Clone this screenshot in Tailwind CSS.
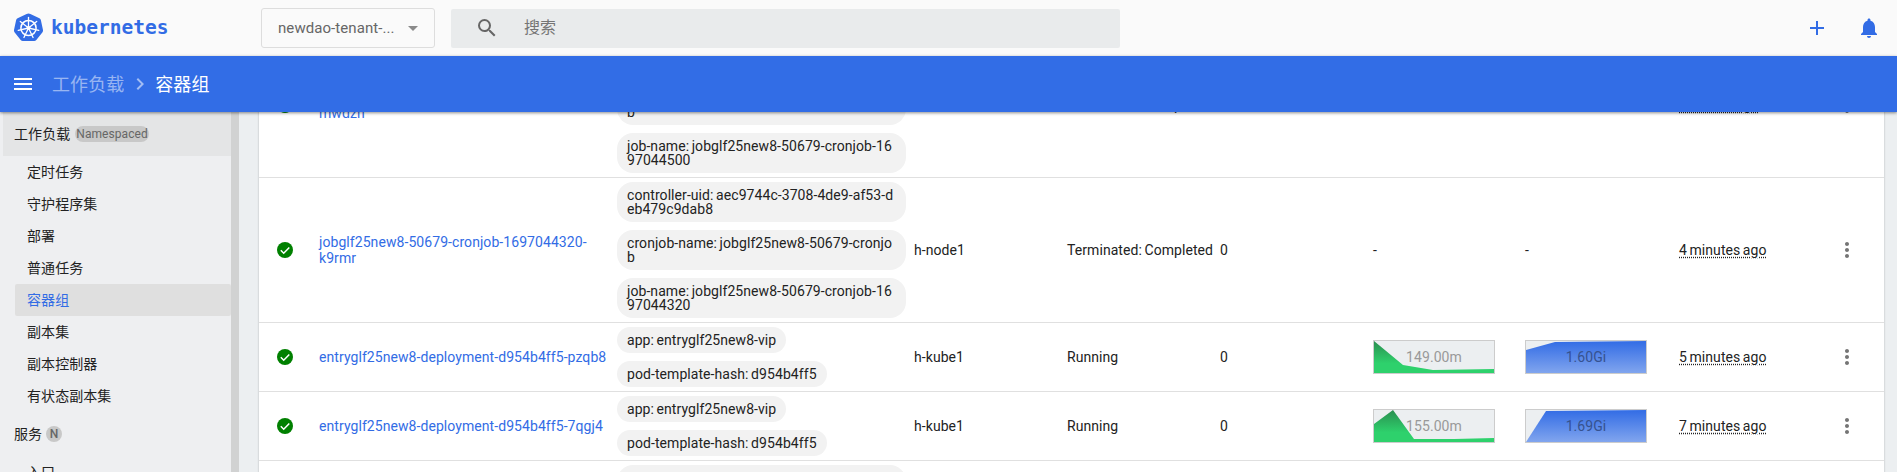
<!DOCTYPE html>
<html>

<head>
  <meta charset="UTF-8" />
  <title>kubernetes</title>
  <script src="https://cdn.jsdelivr.net/npm/@tailwindcss/browser@4"></script>
</head>

<body class="overflow-hidden">
  <div
    class="flex h-[472px] w-[1897px] flex-col overflow-hidden font-['Roboto','Noto_Sans_CJK_SC',sans-serif] text-[14px] tracking-[0.07px] text-[#222] [word-spacing:-1px]">

    <!-- top toolbar -->
    <div class="relative z-10 flex h-[56px] shrink-0 items-center bg-[#fafafa]">
      <div class="ml-[14px] flex w-[247px] items-center">
        <svg class="h-[30px] w-[29px]" viewBox="0 0 29 30">
          <path fill="#326ce5"
            d="M14.5 0.5 Q15.5 0.5 16.4 1 L25.4 5.3 Q26.6 5.9 26.9 7.2 L29 17 Q29.2 18.2 28.5 19.2 L22.3 27.1 Q21.5 28.1 20.2 28.1 L8.8 28.1 Q7.5 28.1 6.7 27.1 L0.5 19.2 Q-0.2 18.2 0 17 L2.1 7.2 Q2.4 5.9 3.6 5.3 L12.6 1 Q13.5 0.5 14.5 0.5Z" />
          <g fill="none" stroke="#fff" stroke-linecap="round">
            <circle cx="14.5" cy="15" r="7.6" stroke-width="1.5" />
            <g stroke-width="1.3">
              <path d="M14.5 15 V4.5" />
              <path d="M14.5 15 V4.5" transform="rotate(51.4 14.5 15)" />
              <path d="M14.5 15 V4.5" transform="rotate(102.9 14.5 15)" />
              <path d="M14.5 15 V4.5" transform="rotate(154.3 14.5 15)" />
              <path d="M14.5 15 V4.5" transform="rotate(205.7 14.5 15)" />
              <path d="M14.5 15 V4.5" transform="rotate(257.1 14.5 15)" />
              <path d="M14.5 15 V4.5" transform="rotate(308.6 14.5 15)" />
            </g>
          </g>
          <circle cx="14.5" cy="15" r="2" fill="#fff" />
        </svg>
        <span class="ml-[8px] font-['DejaVu_Sans_Mono',monospace] text-[19.5px] font-bold tracking-normal text-[#326ce5]">kubernetes</span>
      </div>
      <div
        class="flex h-[40px] w-[174px] items-center justify-between rounded-[3px] border border-[#ddd] pl-[16px] pr-[16px] text-[15px] text-[#666]">
        <span>newdao-tenant-...</span>
        <span class="h-0 w-0 border-x-[5px] border-t-[5px] border-x-transparent border-t-[#8a8a8a]"></span>
      </div>
      <div class="ml-[16px] flex h-[39px] w-[669px] items-center rounded-[2px] bg-[#e9ebec] pl-[24px]">
        <svg class="h-[24px] w-[24px]" viewBox="0 0 24 24" fill="#666">
          <path
            d="M15.5 14h-.79l-.28-.27A6.47 6.47 0 0 0 16 9.5 6.5 6.5 0 1 0 9.5 16c1.61 0 3.09-.59 4.23-1.57l.27.28v.79l5 4.99L20.49 19l-4.99-5zm-6 0C7.01 14 5 11.99 5 9.5S7.01 5 9.5 5 14 7.01 14 9.5 11.99 14 9.5 14z" />
        </svg>
        <span class="ml-[25px] text-[16px] text-[#757575]">搜索</span>
      </div>
      <div class="ml-auto mr-[16px] flex items-center gap-[28px]">
        <svg class="h-[24px] w-[24px]" viewBox="0 0 24 24" fill="#326ce5">
          <path d="M19 13h-6v6h-2v-6H5v-2h6V5h2v6h6v2z" />
        </svg>
        <svg class="h-[24px] w-[24px]" viewBox="0 0 24 24" fill="#326ce5">
          <path
            d="M12 22c1.1 0 2-.9 2-2h-4c0 1.1.9 2 2 2zm6-6v-5c0-3.07-1.63-5.64-4.5-6.32V4c0-.83-.67-1.5-1.5-1.5s-1.5.67-1.5 1.5v.68C7.64 5.36 6 7.92 6 11v5l-2 2v1h16v-1l-2-2z" />
        </svg>
      </div>
    </div>

    <!-- breadcrumb bar -->
    <div
      class="relative z-10 flex h-[56px] shrink-0 items-center bg-[#326de6] pl-[11px] text-[18px] shadow-[0_1px_3px_rgba(0,0,0,0.45)]">
      <svg class="h-[24px] w-[24px]" viewBox="0 0 24 24" fill="#fff">
        <path d="M3 18h18v-2H3v2zm0-5h18v-2H3v2zm0-7v2h18V6H3z" />
      </svg>
      <span class="ml-[17px] text-white/50">工作负载</span>
      <svg class="ml-[4px] h-[24px] w-[24px]" viewBox="0 0 24 24" fill="#fff" fill-opacity="0.55">
        <path d="M10 6 8.6 7.4 13.2 12l-4.6 4.6L10 18l6-6z" />
      </svg>
      <span class="ml-[3px] text-white">容器组</span>
    </div>

    <div class="flex min-h-0 flex-1 overflow-hidden bg-[#eceff1]">
      <!-- sidebar -->
      <div class="flex h-full w-[239px] shrink-0 border-r-[8px] border-[#d1d2d2] bg-[#eeeff1] pl-[3px]">
        <div class="w-full">
          <div class="flex h-[44px] items-center gap-[5px] bg-[#e4e5e6] pl-[11px]">
            工作负载
            <span
              class="flex h-[16px] items-center rounded-full bg-[#c8c8c8] px-[1px] text-[12px] text-[#666]">Namespaced</span>
          </div>
          <div class="flex h-[32px] items-center pl-[24px]">定时任务</div>
          <div class="flex h-[32px] items-center pl-[24px]">守护程序集</div>
          <div class="flex h-[32px] items-center pl-[24px]">部署</div>
          <div class="flex h-[32px] items-center pl-[24px]">普通任务</div>
          <div class="ml-[12px] flex h-[32px] items-center rounded-[2px] bg-[#dfdfdf] pl-[12px] text-[#326ce5]">容器组</div>
          <div class="flex h-[32px] items-center pl-[24px]">副本集</div>
          <div class="flex h-[32px] items-center pl-[24px]">副本控制器</div>
          <div class="flex h-[32px] items-center pl-[24px]">有状态副本集</div>
          <div class="flex h-[44px] items-center gap-[4px] pl-[11px]">
            服务
            <span
              class="flex h-[16px] w-[16px] items-center justify-center rounded-full bg-[#c8c8c8] text-[12px] font-medium text-[#666]">N</span>
          </div>
          <div class="flex h-[32px] items-center pl-[24px]">入口</div>
        </div>
      </div>

      <!-- pod list -->
      <div class="min-w-0 flex-1 pl-[20px] pr-[13px]">
        <div class="mt-[-79px] bg-white leading-[16px] shadow-[0_0_2px_rgba(0,0,0,0.25)]">

          <div
            class="grid grid-cols-[60px_298px_297px_153px_153px_153px_152px_154px_1fr] items-center border-b border-[#e0e0e0] py-[4px]">
            <svg class="ml-[18px] h-[16px] w-[16px]" viewBox="0 0 16 16">
              <circle cx="8" cy="8" r="8" fill="#008000" />
              <path d="M3.8 8.3 6.7 11.2 12.3 5.4" fill="none" stroke="#fff" stroke-width="1.5" />
            </svg>
            <span class="text-[#326ce5]">jobglf25new8-50679-cronjob-1697044500-mwdzn</span>
            <div class="flex w-[289px] flex-col gap-[8px] break-all leading-[14px]">
              <span class="rounded-[16px] bg-[#f2f2f2] py-[6px] pl-[10px] pr-[12px]">controller-uid: 13a0c1f2-5b7e-4c0d-9e21-a47f08c3d5e1</span>
              <span class="rounded-[16px] bg-[#f2f2f2] py-[6px] pl-[10px] pr-[12px]">cronjob-name: jobglf25new8-50679-cronjob</span>
              <span class="rounded-[16px] bg-[#f2f2f2] py-[6px] pl-[10px] pr-[12px]">job-name: jobglf25new8-50679-cronjob-1697044500</span>
            </div>
            <span>h-node1</span>
            <span>Terminated: Completed</span>
            <span>0</span>
            <span>-</span>
            <span>-</span>
            <div class="flex items-center justify-between pr-[25px]">
              <span class="underline decoration-dotted underline-offset-2">1 minute ago</span>
              <svg class="h-[24px] w-[24px]" viewBox="0 0 24 24" fill="#757575">
                <path
                  d="M12 8c1.1 0 2-.9 2-2s-.9-2-2-2-2 .9-2 2 .9 2 2 2zm0 2c-1.1 0-2 .9-2 2s.9 2 2 2 2-.9 2-2-.9-2-2-2zm0 6c-1.1 0-2 .9-2 2s.9 2 2 2 2-.9 2-2-.9-2-2-2z" />
              </svg>
            </div>
          </div>

          <div
            class="grid grid-cols-[60px_298px_297px_153px_153px_153px_152px_154px_1fr] items-center border-b border-[#e0e0e0] py-[4px]">
            <svg class="ml-[18px] h-[16px] w-[16px]" viewBox="0 0 16 16">
              <circle cx="8" cy="8" r="8" fill="#008000" />
              <path d="M3.8 8.3 6.7 11.2 12.3 5.4" fill="none" stroke="#fff" stroke-width="1.5" />
            </svg>
            <span class="text-[#326ce5]">jobglf25new8-50679-cronjob-1697044320-k9rmr</span>
            <div class="flex w-[289px] flex-col gap-[8px] break-all leading-[14px]">
              <span class="rounded-[16px] bg-[#f2f2f2] py-[6px] pl-[10px] pr-[12px]">controller-uid: aec9744c-3708-4de9-af53-deb479c9dab8</span>
              <span class="rounded-[16px] bg-[#f2f2f2] py-[6px] pl-[10px] pr-[12px]">cronjob-name: jobglf25new8-50679-cronjob</span>
              <span class="rounded-[16px] bg-[#f2f2f2] py-[6px] pl-[10px] pr-[12px]">job-name: jobglf25new8-50679-cronjob-1697044320</span>
            </div>
            <span>h-node1</span>
            <span>Terminated: Completed</span>
            <span>0</span>
            <span>-</span>
            <span>-</span>
            <div class="flex items-center justify-between pr-[25px]">
              <span class="underline decoration-dotted underline-offset-2">4 minutes ago</span>
              <svg class="h-[24px] w-[24px]" viewBox="0 0 24 24" fill="#757575">
                <path
                  d="M12 8c1.1 0 2-.9 2-2s-.9-2-2-2-2 .9-2 2 .9 2 2 2zm0 2c-1.1 0-2 .9-2 2s.9 2 2 2 2-.9 2-2-.9-2-2-2zm0 6c-1.1 0-2 .9-2 2s.9 2 2 2 2-.9 2-2-.9-2-2-2z" />
              </svg>
            </div>
          </div>

          <div
            class="grid grid-cols-[60px_298px_297px_153px_153px_153px_152px_154px_1fr] items-center border-b border-[#e0e0e0] py-[4px]">
            <svg class="ml-[18px] h-[16px] w-[16px]" viewBox="0 0 16 16">
              <circle cx="8" cy="8" r="8" fill="#008000" />
              <path d="M3.8 8.3 6.7 11.2 12.3 5.4" fill="none" stroke="#fff" stroke-width="1.5" />
            </svg>
            <span class="text-[#326ce5]">entryglf25new8-deployment-d954b4ff5-pzqb8</span>
            <div class="flex w-[289px] flex-col items-start gap-[8px] break-all leading-[14px]">
              <span class="rounded-[16px] bg-[#f2f2f2] py-[6px] pl-[10px] pr-[10px]">app: entryglf25new8-vip</span>
              <span class="rounded-[16px] bg-[#f2f2f2] py-[6px] pl-[10px] pr-[10px]">pod-template-hash: d954b4ff5</span>
            </div>
            <span>h-kube1</span>
            <span>Running</span>
            <span>0</span>
            <div class="relative flex h-[34px] w-[122px] items-center justify-center border border-[#ccc] bg-[#eceff1] text-[#999]">
              <svg class="absolute inset-0 h-full w-full" viewBox="0 0 120 32" preserveAspectRatio="none">
                <defs>
                  <linearGradient id="cpu1" x1="0" y1="0" x2="0" y2="32" gradientUnits="userSpaceOnUse">
                    <stop offset="0" stop-color="#2a8f50" />
                    <stop offset="0.7" stop-color="#2ed16c" />
                  </linearGradient>
                </defs>
                <path d="M0 0 29 24 59 29 120 28 120 32 0 32Z" fill="url(#cpu1)" />
              </svg>
              <span class="relative">149.00m</span>
            </div>
            <div class="relative flex h-[34px] w-[122px] items-center justify-center border border-[#ccc] bg-[#eceff1] text-[#36528f]">
              <svg class="absolute inset-0 h-full w-full" viewBox="0 0 120 32" preserveAspectRatio="none">
                <defs>
                  <linearGradient id="mem1" x1="0" y1="0" x2="0" y2="32" gradientUnits="userSpaceOnUse">
                    <stop offset="0" stop-color="#326ce5" />
                    <stop offset="1" stop-color="#81a5ee" />
                  </linearGradient>
                </defs>
                <path d="M0 9 29 1 120 0 120 32 0 32Z" fill="url(#mem1)" />
              </svg>
              <span class="relative">1.60Gi</span>
            </div>
            <div class="flex items-center justify-between pr-[25px]">
              <span class="underline decoration-dotted underline-offset-2">5 minutes ago</span>
              <svg class="h-[24px] w-[24px]" viewBox="0 0 24 24" fill="#757575">
                <path
                  d="M12 8c1.1 0 2-.9 2-2s-.9-2-2-2-2 .9-2 2 .9 2 2 2zm0 2c-1.1 0-2 .9-2 2s.9 2 2 2 2-.9 2-2-.9-2-2-2zm0 6c-1.1 0-2 .9-2 2s.9 2 2 2 2-.9 2-2-.9-2-2-2z" />
              </svg>
            </div>
          </div>

          <div
            class="grid grid-cols-[60px_298px_297px_153px_153px_153px_152px_154px_1fr] items-center border-b border-[#e0e0e0] py-[4px]">
            <svg class="ml-[18px] h-[16px] w-[16px]" viewBox="0 0 16 16">
              <circle cx="8" cy="8" r="8" fill="#008000" />
              <path d="M3.8 8.3 6.7 11.2 12.3 5.4" fill="none" stroke="#fff" stroke-width="1.5" />
            </svg>
            <span class="text-[#326ce5]">entryglf25new8-deployment-d954b4ff5-7qgj4</span>
            <div class="flex w-[289px] flex-col items-start gap-[8px] break-all leading-[14px]">
              <span class="rounded-[16px] bg-[#f2f2f2] py-[6px] pl-[10px] pr-[10px]">app: entryglf25new8-vip</span>
              <span class="rounded-[16px] bg-[#f2f2f2] py-[6px] pl-[10px] pr-[10px]">pod-template-hash: d954b4ff5</span>
            </div>
            <span>h-kube1</span>
            <span>Running</span>
            <span>0</span>
            <div class="relative flex h-[34px] w-[122px] items-center justify-center border border-[#ccc] bg-[#eceff1] text-[#999]">
              <svg class="absolute inset-0 h-full w-full" viewBox="0 0 120 32" preserveAspectRatio="none">
                <defs>
                  <linearGradient id="cpu2" x1="0" y1="0" x2="0" y2="32" gradientUnits="userSpaceOnUse">
                    <stop offset="0" stop-color="#2a8f50" />
                    <stop offset="0.7" stop-color="#2ed16c" />
                  </linearGradient>
                </defs>
                <path d="M0 14 19 0 40 29 80 29 120 28 120 32 0 32Z" fill="url(#cpu2)" />
              </svg>
              <span class="relative">155.00m</span>
            </div>
            <div class="relative flex h-[34px] w-[122px] items-center justify-center border border-[#ccc] bg-[#eceff1] text-[#36528f]">
              <svg class="absolute inset-0 h-full w-full" viewBox="0 0 120 32" preserveAspectRatio="none">
                <defs>
                  <linearGradient id="mem2" x1="0" y1="0" x2="0" y2="32" gradientUnits="userSpaceOnUse">
                    <stop offset="0" stop-color="#326ce5" />
                    <stop offset="1" stop-color="#81a5ee" />
                  </linearGradient>
                </defs>
                <path d="M0 32 20 1 120 0 120 32Z" fill="url(#mem2)" />
              </svg>
              <span class="relative">1.69Gi</span>
            </div>
            <div class="flex items-center justify-between pr-[25px]">
              <span class="underline decoration-dotted underline-offset-2">7 minutes ago</span>
              <svg class="h-[24px] w-[24px]" viewBox="0 0 24 24" fill="#757575">
                <path
                  d="M12 8c1.1 0 2-.9 2-2s-.9-2-2-2-2 .9-2 2 .9 2 2 2zm0 2c-1.1 0-2 .9-2 2s.9 2 2 2 2-.9 2-2-.9-2-2-2zm0 6c-1.1 0-2 .9-2 2s.9 2 2 2 2-.9 2-2-.9-2-2-2z" />
              </svg>
            </div>
          </div>

          <div class="grid grid-cols-[60px_298px_297px_1fr] py-[4px]">
            <span></span>
            <span></span>
            <div class="flex w-[289px] flex-col leading-[14px]">
              <span class="h-[40px] rounded-[16px] bg-[#f2f2f2]"></span>
            </div>
          </div>

        </div>
      </div>
    </div>
  </div>
</body>

</html>
